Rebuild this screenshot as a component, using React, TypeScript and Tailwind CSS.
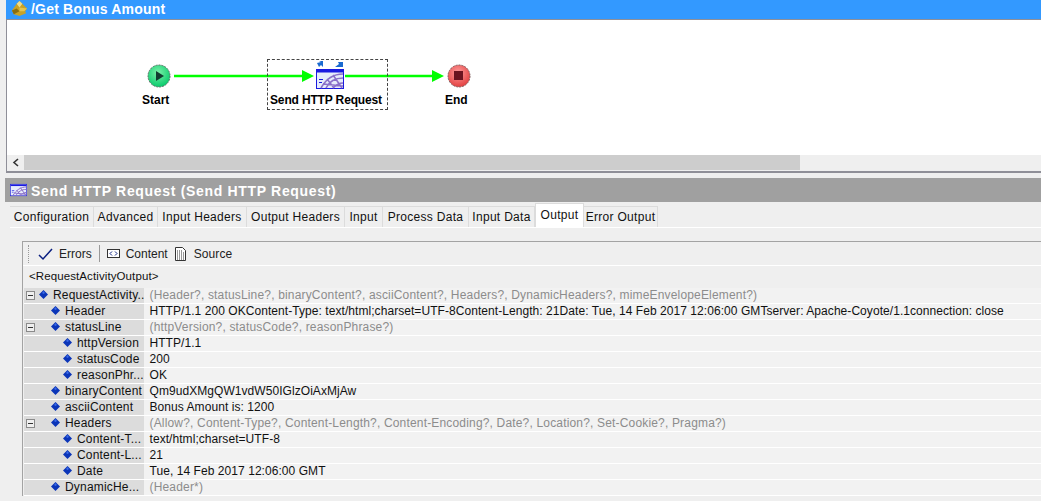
import React from 'react';

const FONT = 'font-["Liberation_Sans",Arial,sans-serif]';

const TABS = [
  { label: 'Configuration', width: 'w-[84px]' },
  { label: 'Advanced', width: 'w-[64px]' },
  { label: 'Input Headers', width: 'w-[89px]' },
  { label: 'Output Headers', width: 'w-[98px]' },
  { label: 'Input', width: 'w-[38px]' },
  { label: 'Process Data', width: 'w-[86px]' },
  { label: 'Input Data', width: 'w-[66px]' },
  { label: 'Output', width: 'w-[49px]', active: true },
  { label: 'Error Output', width: 'w-[74px]' },
];

interface Row {
  name: string;
  value: string;
  depth: number;
  hint?: boolean;
  toggle?: boolean;
}

const ROWS: Row[] = [
  { name: 'RequestActivity...', value: '(Header?, statusLine?, binaryContent?, asciiContent?, Headers?, DynamicHeaders?, mimeEnvelopeElement?)', depth: 0, hint: true, toggle: true },
  { name: 'Header', value: 'HTTP/1.1 200 OKContent-Type: text/html;charset=UTF-8Content-Length: 21Date: Tue, 14 Feb 2017 12:06:00 GMTserver: Apache-Coyote/1.1connection: close', depth: 1 },
  { name: 'statusLine', value: '(httpVersion?, statusCode?, reasonPhrase?)', depth: 1, hint: true, toggle: true },
  { name: 'httpVersion', value: 'HTTP/1.1', depth: 2 },
  { name: 'statusCode', value: '200', depth: 2 },
  { name: 'reasonPhr...', value: 'OK', depth: 2 },
  { name: 'binaryContent', value: 'Qm9udXMgQW1vdW50IGlzOiAxMjAw', depth: 1 },
  { name: 'asciiContent', value: 'Bonus Amount is: 1200', depth: 1 },
  { name: 'Headers', value: '(Allow?, Content-Type?, Content-Length?, Content-Encoding?, Date?, Location?, Set-Cookie?, Pragma?)', depth: 1, hint: true, toggle: true },
  { name: 'Content-T...', value: 'text/html;charset=UTF-8', depth: 2 },
  { name: 'Content-L...', value: '21', depth: 2 },
  { name: 'Date', value: 'Tue, 14 Feb 2017 12:06:00 GMT', depth: 2 },
  { name: 'DynamicHe...', value: '(Header*)', depth: 1, hint: true },
];

function ProcessIcon() {
  return (
    <svg width="17" height="17" viewBox="0 0 18 18" className="shrink-0">
      <path d="M1 11 L6 4 L9 1 L12 4 L17 9 L15 12 L16 14 L9 17 L3 15 Z" fill="#c9a227" />
      <path d="M6 4 L9 1 L12 4 L9 8 Z" fill="#f0dc8a" />
      <path d="M1 11 L6 9 L9 12 L3 15 Z" fill="#8a6d12" />
      <path d="M9 8 L17 9 L14 12 L9 12 Z" fill="#e3c552" />
    </svg>
  );
}

function HttpGlyph({ width, height }: { width: number; height: number }) {
  return (
    <svg width={width} height={height} viewBox="0 0 28 20" className="shrink-0">
      <rect x="0.5" y="0.5" width="27" height="19" fill="#e6ecfb" stroke="#1a1ae0" />
      <rect x="1" y="1" width="26" height="2.5" fill="#1a1ae0" />
      <path d="M5 19 C10 10 18 5 27 5 M10 19 C13 13 19 9 27 9 M17 19 C19 17 23 14 27 14 M11 10 L18 19 M17 6 L26 19 M7 15 L27 17" fill="none" stroke="#8a70c8" strokeWidth="1.6" />
      <rect x="3" y="10" width="4" height="1" fill="#1a1ae0" />
      <rect x="3" y="13" width="3" height="1" fill="#1a1ae0" />
    </svg>
  );
}

function Diamond() {
  return (
    <svg width="9" height="9" viewBox="0 0 9 9" className="shrink-0">
      <path d="M4.5 0 L9 4.5 L4.5 9 L0 4.5 Z" fill="#0b35b8" />
      <path d="M4.5 1 L6 3 L4.5 4 L3 3 Z" fill="#3a6ae8" />
    </svg>
  );
}

function Toggle() {
  return (
    <span className="flex h-[9px] w-[9px] items-center justify-center border border-[#8a8a8a] bg-[#efefef]">
      <span className="h-px w-[5px] bg-[#333]" />
    </span>
  );
}

function Tree() {
  return (
    <div className="flex flex-col">
      {ROWS.map(row => (
        <div key={row.name} className="flex h-4 border-b border-white">
          <div className="flex w-[120px] shrink-0 items-center bg-[#dcdcdc]">
            <span className="flex w-[12px] shrink-0 justify-center">{row.toggle && <Toggle />}</span>
            <span className={row.depth === 0 ? 'w-0' : row.depth === 1 ? 'w-3' : 'w-6'} />
            <span className="-mt-0.5 ml-[3px]">
              <Diamond />
            </span>
            <span className="ml-[5px] whitespace-nowrap pb-0.5 tracking-[0.18px] text-[#111]">{row.name}</span>
          </div>
          <div
            className={`flex-1 whitespace-nowrap bg-[#f2f2f2] pl-[5.5px] leading-[15px] ${
              row.hint ? 'tracking-[0.17px] text-[#8c8c8c]' : 'tracking-[0.06px] text-[#111]'
            }`}
          >
            {row.value}
          </div>
        </div>
      ))}
    </div>
  );
}

function Canvas() {
  return (
    <div className="relative h-[135px] overflow-hidden bg-white">
      <svg width="480" height="135" className="absolute left-0 top-0">
        <path d="M167 56 H297" stroke="#00ff00" strokeWidth="2.5" />
        <path d="M295 50 L307 56 L295 62 Z" fill="#00ff00" />
        <path d="M338 56 H427" stroke="#00ff00" strokeWidth="2.5" />
        <path d="M425 50 L437 56 L425 62 Z" fill="#00ff00" />
        <defs>
          <radialGradient id="startFill" cx="0.45" cy="0.35" r="0.7">
            <stop offset="0" stopColor="#7cf0a8" />
            <stop offset="1" stopColor="#00c868" />
          </radialGradient>
          <radialGradient id="endFill" cx="0.45" cy="0.35" r="0.7">
            <stop offset="0" stopColor="#ff9c9c" />
            <stop offset="1" stopColor="#e03a3a" />
          </radialGradient>
        </defs>
        <circle cx="152" cy="56" r="11" fill="url(#startFill)" stroke="#607068" strokeDasharray="2 1" />
        <path d="M149 51 L157 56 L149 61 Z" fill="#123c30" />
        <circle cx="452" cy="56" r="11" fill="url(#endFill)" stroke="#806060" strokeDasharray="2 1" />
        <rect x="447" y="51" width="9" height="9" fill="#6a1420" />
        <path d="M310 43 L314 42 L312 41 H316 V47 L314 45 L312 47 Z" fill="#1a6ad0" />
        <path d="M328 47 L332 44 L331 42 L336 42 V47 Z" fill="#1a6ad0" />
      </svg>
      <div className="absolute left-[309px] top-[49px]">
        <HttpGlyph width={28} height={20} />
      </div>
      <div className="absolute left-[260px] top-[39px] h-[51px] w-[121px] border border-dashed border-[#444]" />
      <span className="absolute left-[135px] top-[72px] text-xs font-bold text-black">Start</span>
      <span className="absolute left-[263px] top-[72px] whitespace-nowrap text-xs font-bold tracking-[-0.15px] text-black">Send HTTP Request</span>
      <span className="absolute left-[438px] top-[72px] text-xs font-bold text-black">End</span>
    </div>
  );
}

export default function App() {
  return (
    <div className={`${FONT} h-[501px] w-[1041px] overflow-hidden bg-[#efefef] text-xs`}>
      <div className="ml-[6px] flex h-[173px] flex-col border-b-2 border-l border-[#8f8f98]">
        <div className="-ml-px flex h-[20px] items-center gap-[3px] border-b border-[#8f8f98] bg-[#3399ff] pb-0.5 pl-[5px]">
          <ProcessIcon />
          <span className="text-sm font-bold tracking-[0.2px] text-white">/Get Bonus Amount</span>
        </div>
        <Canvas />
        <div className="flex h-[15px] items-stretch">
          <div className="flex w-[17px] items-center justify-center bg-[#efefef]">
            <svg width="8" height="9" viewBox="0 0 8 9">
              <path d="M6 1 L2 4.5 L6 8" fill="none" stroke="#333" strokeWidth="1.6" />
            </svg>
          </div>
          <div className="w-[776px] bg-[#cdcdcd]" />
        </div>
      </div>

      <div className="mt-[5px] ml-[5px] flex h-[24px] items-center gap-1 bg-[#a0a0a0] pl-[5px]">
        <HttpGlyph width={17} height={14} />
        <span className="pt-0.5 text-sm font-bold tracking-[0.68px] text-white">Send HTTP Request (Send HTTP Request)</span>
      </div>

      <div className="ml-[10px] mt-[3px] flex h-[23px] items-end border-b border-white">
        {TABS.map(tab => (
          <div
            key={tab.label}
            className={`flex items-center justify-center whitespace-nowrap border-r border-[#dcdcdc] tracking-[0.3px] text-[#111] ${tab.width} ${
              tab.active ? 'h-[24px] border-l border-t bg-white pb-0.5' : 'h-[21px] border-t bg-[#efefef]'
            }`}
          >
            {tab.label}
          </div>
        ))}
      </div>

      <div className="ml-[22px] mt-[13px] border-l border-t border-[#a3a3a3]">
        <div className="flex h-[24px] items-center border-b border-white pl-[5px] text-[#222]">
          <span className="h-[18px] w-px border-l border-dotted border-[#999]" />
          <svg width="16" height="14" viewBox="0 0 16 14" className="ml-[9px]">
            <path d="M1 8 L5 12 L14 2" fill="none" stroke="#0a1f80" strokeWidth="1.5" />
          </svg>
          <span className="ml-[5px]">Errors</span>
          <span className="ml-[7px] h-[17px] w-px bg-[#999]" />
          <svg width="13" height="9" viewBox="0 0 13 9" className="ml-[7px]">
            <rect x="0.5" y="0.5" width="12" height="8" fill="white" stroke="#333" />
            <path d="M5 2.5 L3 4.5 L5 6.5 M8 2.5 L10 4.5 L8 6.5" fill="none" stroke="#0a1f80" />
          </svg>
          <span className="ml-[6px]">Content</span>
          <svg width="11" height="14" viewBox="0 0 11 14" className="ml-[7px]">
            <path d="M0.5 0.5 H7.5 L10.5 3.5 V13.5 H0.5 Z" fill="white" stroke="#333" />
            <path d="M2 4 H8 M2 6 H9 M2 8 H9 M2 10 H9 M2 12 H9" stroke="#333" strokeDasharray="1 1" />
          </svg>
          <span className="ml-[8px] tracking-[0.1px]">Source</span>
        </div>
        <div className="flex h-[22px] items-center pl-[6px] text-[11.5px] tracking-[0.1px] text-[#111]">&lt;RequestActivityOutput&gt;</div>
        <div className="ml-px">
          <Tree />
        </div>
      </div>
    </div>
  );
}
